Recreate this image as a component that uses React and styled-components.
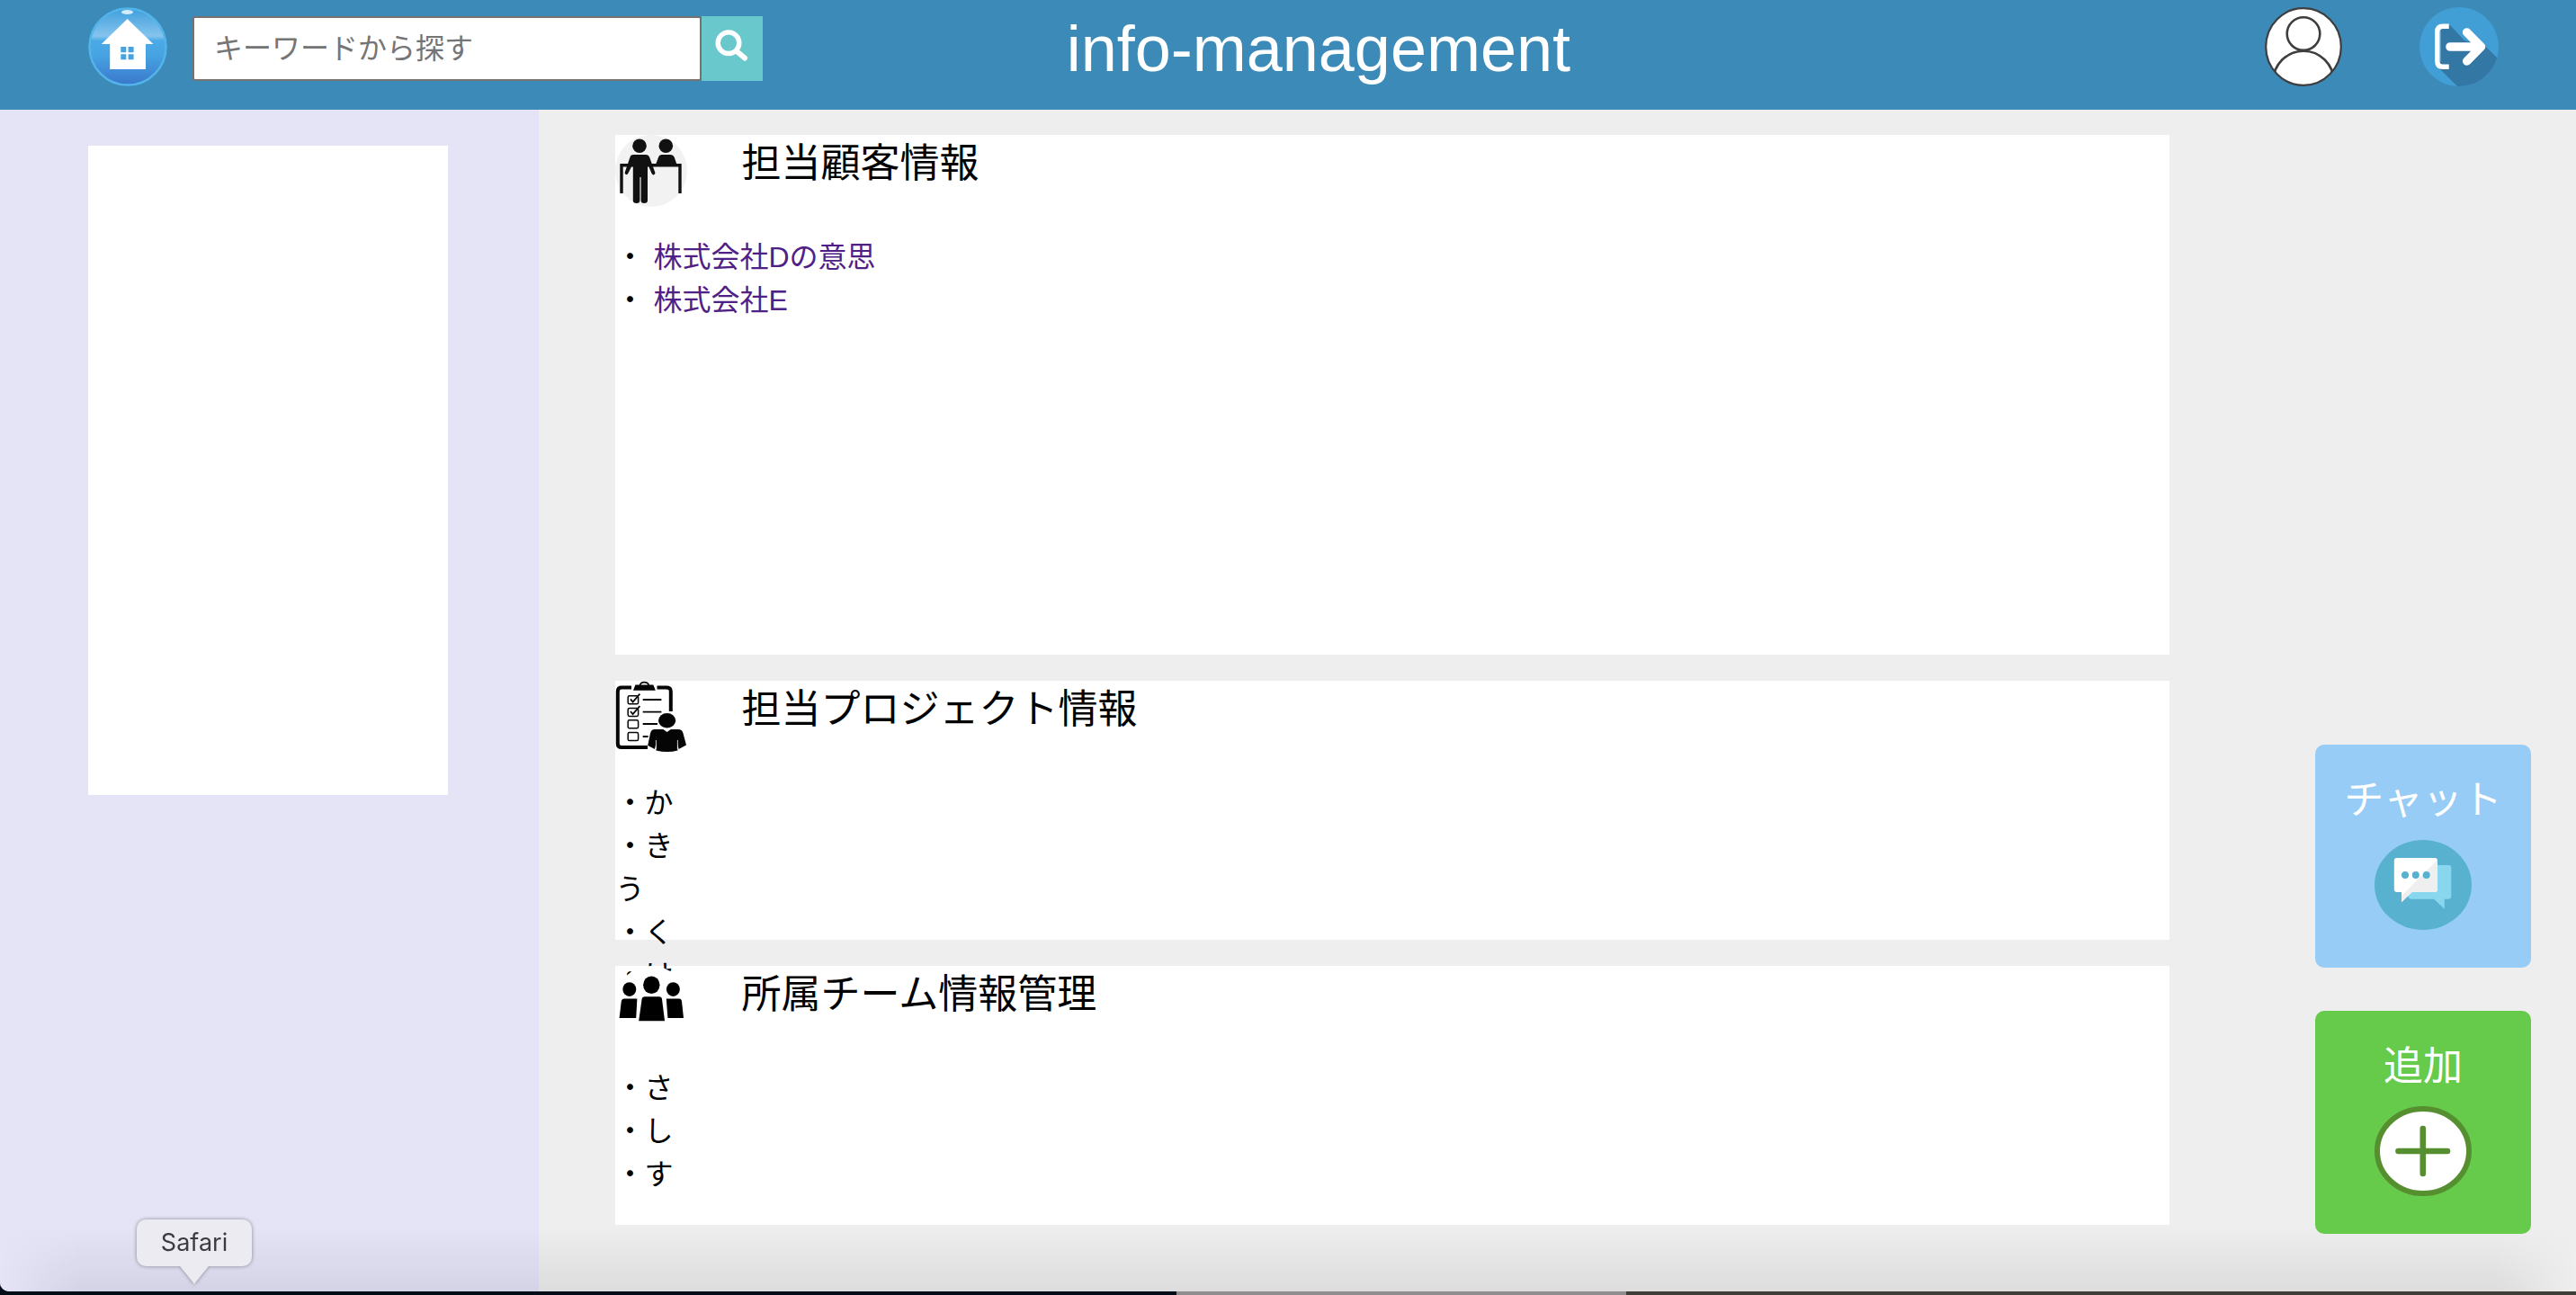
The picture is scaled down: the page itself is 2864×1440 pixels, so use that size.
import { useState } from "react";
import styled, { createGlobalStyle } from "styled-components";

const customers = [
    { id: 1, name: "株式会社Dの意思" },
    { id: 2, name: "株式会社E" },
];
const projects = ["・か", "・き", "う", "・く", "・け"];
const teams = ["・さ", "・し", "・す"];

const dockItems = [
    { id: 1, size: 1308, color: "#020d18" },
    { id: 2, size: 500, color: "#8f8d8e" },
    { id: 3, size: 1056, color: "#3f3e39" },
];

function HomeIcon() {
    return (
        <svg width="88" height="88" viewBox="0 0 88 88" aria-hidden="true">
            <defs>
                <linearGradient id="homeGlass" x1="0" y1="0" x2="0" y2="1">
                    <stop offset="0" stopColor="#3f9fdc" />
                    <stop offset="0.36" stopColor="#86c4ee" />
                    <stop offset="0.42" stopColor="#4aaae6" />
                    <stop offset="0.6" stopColor="#47a4e3" />
                    <stop offset="1" stopColor="#3a78cb" />
                </linearGradient>
            </defs>
            <circle cx="44" cy="44" r="42.5" fill="url(#homeGlass)" stroke="#53b4ea" strokeWidth="2.5" />
            <ellipse cx="43.5" cy="5.5" rx="6.5" ry="2.5" fill="#d3ecfb" />
            <path d="M43.6 13L72.4 41H64V69H24.2V41H14.8Z" fill="#fff" />
            <path d="M36.3 44h6v6.2h-6zM44.6 44h6v6.2h-6zM36.3 52.2h6v6h-6zM44.6 52.2h6v6h-6z" fill="#46a3e2" />
        </svg>
    );
}

function SearchIcon() {
    return (
        <svg width="68" height="72" viewBox="0 0 68 72" fill="none" stroke="#fff" aria-hidden="true">
            <circle cx="30" cy="29.7" r="11.8" strokeWidth="5.4" />
            <path d="M39 39L48 46.5" strokeWidth="6" strokeLinecap="round" />
        </svg>
    );
}

function UserIcon() {
    return (
        <svg width="86" height="88" viewBox="0 0 86 88" aria-hidden="true">
            <defs>
                <clipPath id="userClip">
                    <ellipse cx="43" cy="44" rx="42" ry="43" />
                </clipPath>
            </defs>
            <ellipse cx="43" cy="44" rx="42" ry="43" fill="#fff" />
            <g fill="none" stroke="#403d3e" strokeWidth="2.6">
                <circle cx="43" cy="29.6" r="18.3" />
                <circle cx="43" cy="82.3" r="33.6" clipPath="url(#userClip)" />
                <ellipse cx="43" cy="44" rx="41.8" ry="42.8" strokeWidth="2.2" />
            </g>
        </svg>
    );
}

function LogoutIcon() {
    return (
        <svg width="88" height="88" viewBox="0 0 88 88" aria-hidden="true">
            <defs>
                <clipPath id="logoutClip">
                    <circle cx="44" cy="44" r="44" />
                </clipPath>
            </defs>
            <circle cx="44" cy="44" r="44" fill="#419fd6" />
            <path d="M34 20L50 37L73 43L92 62V92H46L20 66L24 60V24Z" fill="#3377a5" clipPath="url(#logoutClip)" />
            <g fill="none" stroke="#fff" strokeLinejoin="round">
                <path d="M32.7 21.3H26Q19.8 21.3 19.8 27.5V60Q19.8 66.3 26 66.3H32.7" strokeWidth="5.4" />
                <path d="M34 44H68M52.7 28L68.5 44L52.7 60" strokeWidth="9.6" strokeLinecap="round" />
            </g>
        </svg>
    );
}

function CustomerIcon() {
    return (
        <svg width="80" height="80" viewBox="0 0 80 80" aria-hidden="true">
            <circle cx="40" cy="40" r="40" fill="#f2f2f2" />
            <path d="M7 65V33.8H72V65" fill="none" stroke="#111" strokeWidth="3.4" />
            <g fill="#111">
                <circle cx="27" cy="12.3" r="7.8" />
                <circle cx="56.3" cy="12.3" r="7.8" />
                <path d="M52 22H61Q64.5 22 65.8 25L68.5 33H45L48 25Q49 22 52 22Z" />
                <path d="M20 22H34Q37 22 38.2 25L44.4 42Q44.6 44 42.8 44.4Q41.4 44.6 40.6 43L36 32V73Q36 76 32.2 76Q28.6 76 28.6 73V47H27.4V73Q27.4 76 23.6 76Q19.8 76 19.8 73V32L14.2 43Q13.2 44.6 11.8 44Q10.2 43.4 10.8 41.6L16.4 25Q17.2 22 20 22Z" />
            </g>
        </svg>
    );
}

function ProjectIcon() {
    return (
        <svg width="80" height="80" viewBox="0 0 80 80" fill="none" stroke="#050505" aria-hidden="true">
            <path d="M18 7.6H7Q2.8 7.6 2.8 12V70Q2.8 74 7 74H36M46.5 7.6H57Q61.8 7.6 61.8 12V34" strokeWidth="4" />
            <path d="M20 10.8L22.4 4.6H42.4L44.8 10.8Z" fill="#050505" stroke="none" />
            <path d="M27.4 5Q28.4 1.6 32.3 1.6Q36.4 1.6 37.4 5" strokeWidth="1.6" />
            <g strokeWidth="1.5">
                <rect x="14.2" y="16.8" width="11.4" height="9" rx="1.6" />
                <rect x="14.2" y="30.4" width="11.4" height="9" rx="1.6" />
                <rect x="14.2" y="43.8" width="11.4" height="9" rx="1.6" />
                <rect x="14.2" y="57.6" width="11.4" height="9" rx="1.6" />
                <path d="M30.7 21H51.4M30.7 34.7H51.4M30.7 48H47M30.7 62H36.6" strokeWidth="1.8" />
            </g>
            <path d="M17 20.4L19.6 23.6L27.4 14.6M17 34L19.6 37.2L27.4 28.2" strokeWidth="1.8" />
            <ellipse cx="57.6" cy="44.3" rx="9.6" ry="8.2" fill="#050505" stroke="none" />
            <path d="M44 54H53.4L57.6 57L61.8 54H70Q74.4 54 75.4 58L79 71.4L70.6 76L69.4 70V77.6Q58 80.6 45.4 77.6V70L44 76L36.2 72L39 58.4Q40 54 44 54Z" fill="#050505" stroke="none" />
            <path d="M45.4 66V76M69.4 66V76" stroke="#fff" strokeWidth="0.8" />
        </svg>
    );
}

function TeamIcon() {
    return (
        <svg width="80" height="80" viewBox="0 0 80 80" aria-hidden="true">
            <circle cx="40" cy="40" r="40" fill="#fff" />
            <ellipse cx="40.3" cy="21.3" rx="9.2" ry="9.8" />
            <ellipse cx="15.8" cy="26.1" rx="7.5" ry="7.8" />
            <ellipse cx="64.4" cy="26.1" rx="7.5" ry="7.8" />
            <path d="M33 34.3H48.8Q51.6 34.3 52 37L55 61.2H26.2L29.6 37Q30 34.3 33 34.3Z" />
            <path d="M10 36.6H24.4L23.2 58H4.6L6.8 39.6Q7.4 36.6 10 36.6Z" />
            <path d="M56.8 36.6H71.2Q73.6 36.6 74 39.6L76 58H58.4Z" />
        </svg>
    );
}

function ChatIcon() {
    return (
        <svg width="108" height="100" viewBox="0 0 108 100" aria-hidden="true">
            <ellipse cx="54" cy="50" rx="54" ry="50" fill="#57b1cf" />
            <path d="M66 28H82.3Q85.3 28 85.3 31V62.6Q85.3 65.7 82.3 65.7H77.8V76.7L66 65.7H41Q37.4 65.7 37.4 62V56H66Z" fill="#88d7ee" />
            <path d="M25 20H67Q70 20 70 23V55Q70 58 67 58H41.7L30 69.3V58H25Q21.8 58 21.8 55V23Q21.8 20 25 20Z" fill="#fff" />
            <path d="M70 22V55Q70 58 67 58H41.7L30 69.3V62Z" fill="#efefef" />
            <g fill="#57b1cf">
                <circle cx="34" cy="39" r="4" />
                <circle cx="45.8" cy="39" r="4" />
                <circle cx="57.7" cy="39" r="4" />
            </g>
        </svg>
    );
}

function AddIcon() {
    return (
        <svg width="108" height="100" viewBox="0 0 108 100" aria-hidden="true">
            <ellipse cx="54" cy="50" rx="51" ry="47" fill="#fff" stroke="#558f2f" strokeWidth="6" />
            <path d="M26.5 50H81M53.8 25V75" stroke="#558f2f" strokeWidth="6.6" strokeLinecap="round" />
        </svg>
    );
}

function App() {
    const [keyword, setKeyword] = useState("");

    return (
        <Page>
            <GlobalStyle />
            <Content>
                <Header>
                    <IconLink href="#home" aria-label="ホーム">
                        <HomeIcon />
                    </IconLink>
                    <SearchForm onSubmit={e => e.preventDefault()}>
                        <SearchInput
                            type="text"
                            name="keyword"
                            aria-label="キーワード"
                            placeholder="キーワードから探す"
                            value={keyword}
                            onChange={e => setKeyword(e.target.value)}
                        />
                        <SearchButton type="submit" aria-label="検索">
                            <SearchIcon />
                        </SearchButton>
                    </SearchForm>
                    <Title>info-management</Title>
                    <UserMenu>
                        <IconLink href="#profile" aria-label="プロフィール">
                            <UserIcon />
                        </IconLink>
                        <IconLink href="#logout" aria-label="ログアウト">
                            <LogoutIcon />
                        </IconLink>
                    </UserMenu>
                </Header>

                <Columns>
                    <Sidebar>
                        <SidebarPanel />
                    </Sidebar>
                    <Main>
                        <Card $height={578}>
                            <CardHeader>
                                <CustomerIcon />
                                <CardTitle>担当顧客情報</CardTitle>
                            </CardHeader>
                            <List>
                                {customers.map(customer => (
                                    <ListItem key={customer.id}>
                                        ・<CustomerLink href={`#customer-${customer.id}`}>{customer.name}</CustomerLink>
                                    </ListItem>
                                ))}
                            </List>
                        </Card>
                        <Card $height={288}>
                            <CardHeader>
                                <ProjectIcon />
                                <CardTitle>担当プロジェクト情報</CardTitle>
                            </CardHeader>
                            <List>
                                {projects.map(project => <ListItem key={project}>{project}</ListItem>)}
                            </List>
                        </Card>
                        <Card $height={288}>
                            <CardHeader>
                                <TeamIcon />
                                <CardTitle>所属チーム情報管理</CardTitle>
                            </CardHeader>
                            <List>
                                {teams.map(team => <ListItem key={team}>{team}</ListItem>)}
                            </List>
                        </Card>
                    </Main>
                </Columns>
                <BottomShade />
            </Content>

            <Dock>
                {dockItems.map(item => <DockItem key={item.id} $size={item.size} $color={item.color} />)}
            </Dock>

            <Actions>
                <ActionButton type="button" $color="#97ccf6">
                    チャット
                    <ChatIcon />
                </ActionButton>
                <ActionButton type="button" $color="#66ca4b">
                    追加
                    <AddIcon />
                </ActionButton>
            </Actions>

            <Tooltip role="tooltip">Safari</Tooltip>
        </Page>
    );
}

const GlobalStyle = createGlobalStyle`
    * {
        box-sizing: border-box;
    }

    body {
        margin: 0;
        background-color: #020d18;
        color: #000;
        font-family: "Liberation Sans", "Noto Sans CJK JP", sans-serif;
        font-size: 32px;
    }

    svg {
        display: block;
        flex-shrink: 0;
    }
`

const Page = styled.div`
    min-height: 100vh;
    display: flex;
    flex-direction: column;
`

const Content = styled.div`
    position: relative;
    flex: 1;
    display: flex;
    flex-direction: column;
    overflow: hidden;
    border-bottom-left-radius: 10px;
    background-color: #eee;
`

const Header = styled.header`
    height: 122px;
    padding: 8px 3% 0 98px;
    display: flex;
    align-items: flex-start;
    background-color: #3b8ab8;
`

const IconLink = styled.a`
    display: block;
`

const SearchForm = styled.form`
    display: flex;
    margin: 10px 0 0 28px;
`

const SearchInput = styled.input`
    width: 566px;
    height: 72px;
    padding: 0 22px;
    border: 2px solid #767271;
    border-radius: 3px;
    background-color: #fff;
    font-family: inherit;
    font-size: 32px;

    &::placeholder {
        color: #757575;
    }
`

const SearchButton = styled.button`
    width: 68px;
    height: 72px;
    padding: 0;
    border: none;
    background-color: #68c8cb;
`

const Title = styled.h1`
    margin: 0 0 0 12.6%;
    color: #fff;
    font-size: 72px;
    font-weight: 400;
    line-height: 92px;
`

const UserMenu = styled.nav`
    display: flex;
    gap: 86px;
    margin-left: auto;
`

const Columns = styled.div`
    flex: 1;
    display: flex;
`

const Sidebar = styled.aside`
    width: 20.9%;
    padding: 40px 0 0 98px;
    background-color: #e5e4f7;
`

const SidebarPanel = styled.div`
    width: 80%;
    height: 722px;
    background-color: #fff;
`

const Main = styled.main`
    flex: 1;
    padding: 28px 15.8% 0 3%;
`

/* block layout on purpose: a long list runs over the card below */
const Card = styled.section`
    height: ${props => props.$height}px;
    margin-bottom: 29px;
    background-color: #fff;
`

const CardHeader = styled.div`
    display: flex;
    gap: 60px;
    height: 80px;
`

const CardTitle = styled.h2`
    margin: 0;
    font-size: 44px;
    font-weight: 400;
    line-height: 64px;
`

const List = styled.ul`
    margin: 32px 0 0;
    padding: 0;
    list-style: none;
`

const ListItem = styled.li`
    line-height: 48px;
`

const CustomerLink = styled.a`
    margin-left: 10px;
    color: #4f2187;
    text-decoration: none;
`

const BottomShade = styled.div`
    position: absolute;
    right: 0;
    bottom: 0;
    left: 0;
    height: 72px;
    background: linear-gradient(to bottom, rgba(0, 0, 0, 0), rgba(0, 0, 0, 0.07));
    mask-image: linear-gradient(to right, transparent, #000 90px, #000 calc(100% - 90px), transparent);
    pointer-events: none;
`

const Dock = styled.div`
    display: flex;
    height: 4px;
`

const DockItem = styled.div`
    flex: ${props => props.$size};
    background-color: ${props => props.$color};
`

const Actions = styled.div`
    position: fixed;
    right: 50px;
    bottom: 68px;
    display: flex;
    flex-direction: column;
    gap: 48px;
`

const ActionButton = styled.button`
    display: flex;
    flex-direction: column;
    align-items: center;
    gap: 12px;
    width: 240px;
    height: 248px;
    padding: 30px 0 0;
    border: none;
    border-radius: 10px;
    background-color: ${props => props.$color};
    color: #fff;
    font-family: inherit;
    font-size: 44px;
    line-height: 64px;
`

const Tooltip = styled.div`
    position: fixed;
    left: 152px;
    bottom: 32px;
    width: 128px;
    border-radius: 10px;
    background-color: #ebebf1;
    color: #3c3c40;
    font-family: Inter, "Liberation Sans", sans-serif;
    font-size: 27px;
    line-height: 52px;
    text-align: center;
    filter: drop-shadow(0 0 2px rgba(0, 0, 0, 0.4));

    &::after {
        content: "";
        position: absolute;
        top: 100%;
        left: 48px;
        width: 32px;
        height: 20px;
        background-color: #ebebf1;
        clip-path: polygon(0 0, 100% 0, 54% 90%, 50% 100%, 46% 90%);
    }
`

export default App;
